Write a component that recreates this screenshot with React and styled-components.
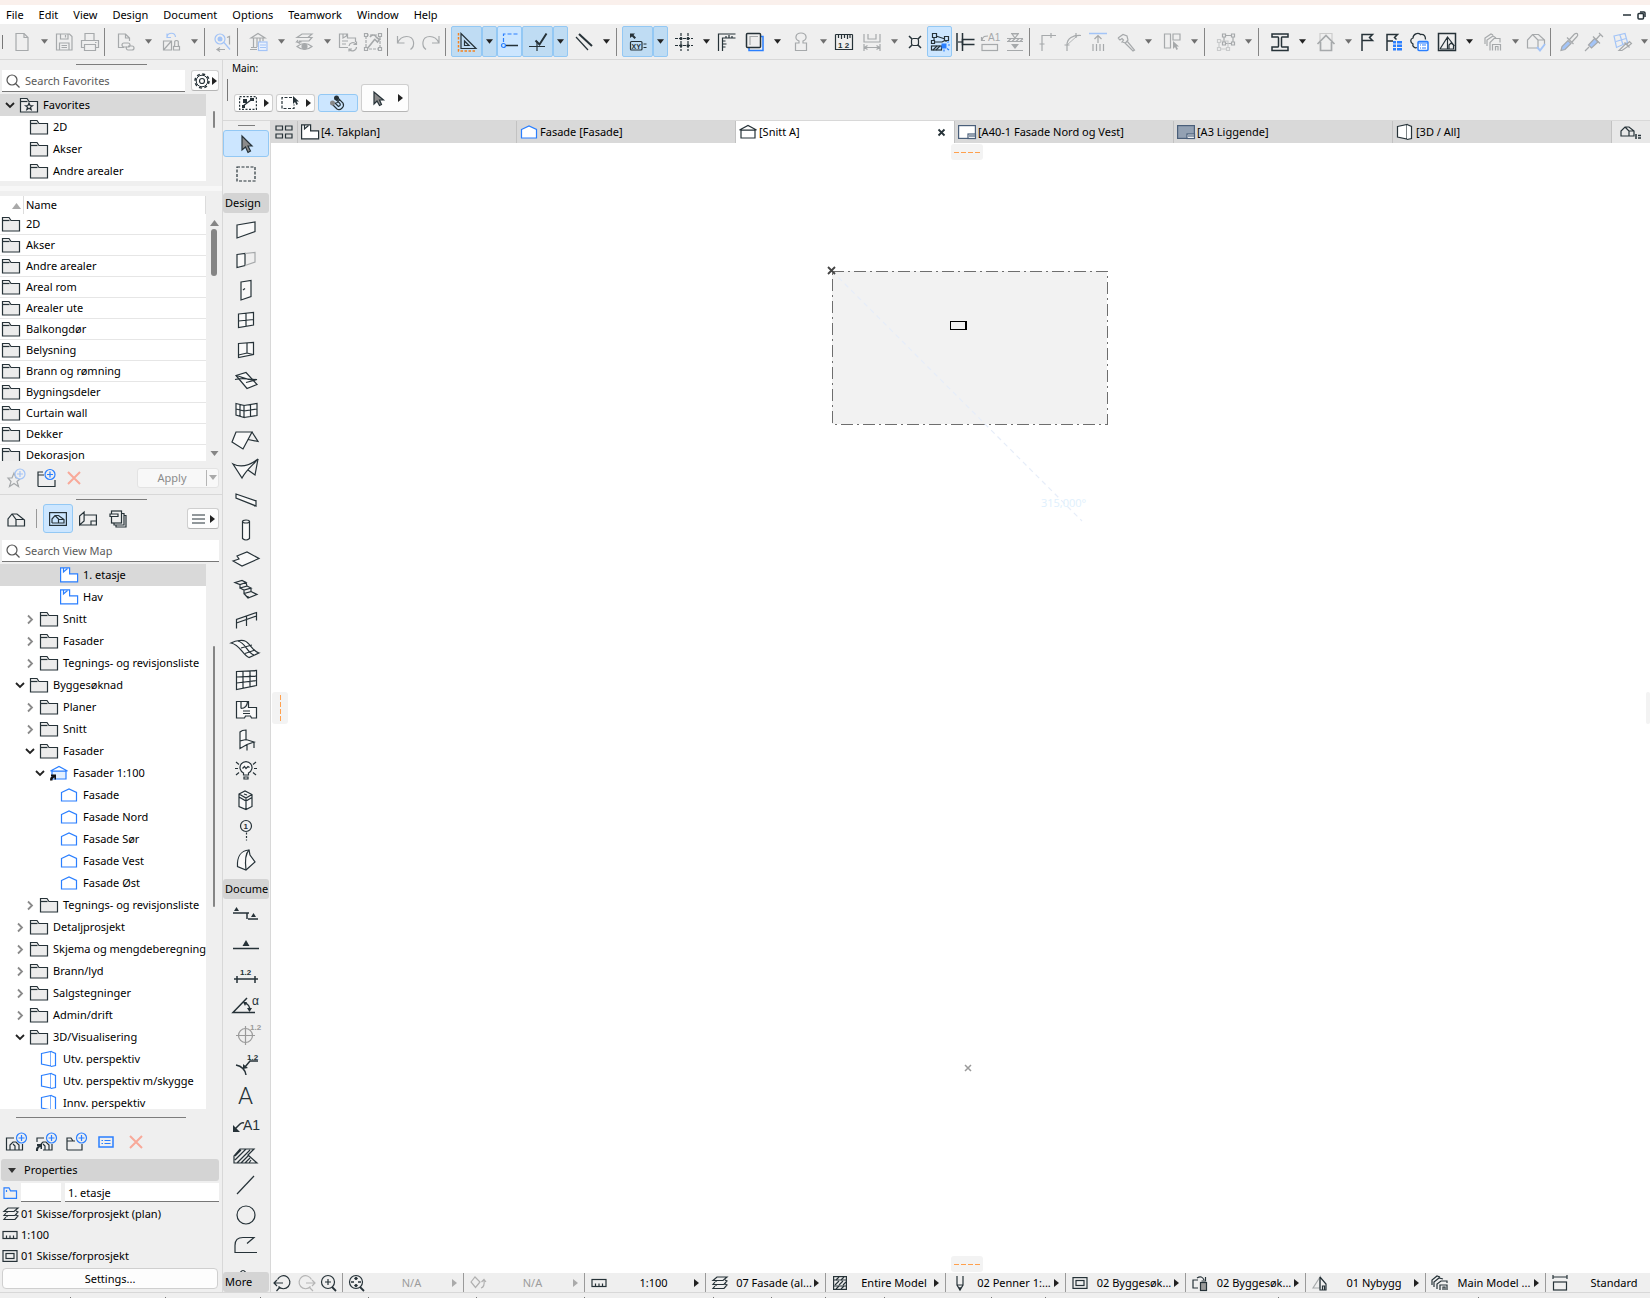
import React from "react";
import styled, { createGlobalStyle, css } from "styled-components";

const INK = "#263238";
const OFF = "#a6a9ab";
const BLUE = "#2a7fff";
const PALE = "#a3c4f7";
const GREY = "#efefef";
const LINE = "#d8d8d8";

const Global = createGlobalStyle`
  *, *::before, *::after { box-sizing: border-box; }
  body { margin: 0; background: ${GREY}; }
  body, button, input, table {
    font-family: "Noto Sans", "Open Sans", "Liberation Sans", sans-serif;
    font-size: 11px;
    line-height: 16px;
    color: #000;
  }
  button { padding: 0; border: 0; background: none; cursor: default; }
  ul { margin: 0; padding: 0; list-style: none; }
  svg { display: block; flex: none; overflow: visible; }
`;

/* ---------- drawings ---------- */

const Svg = ({ w = 20, h = 20, color = INK, children }) => (
  <svg width={w} height={h} viewBox={`0 0 ${w} ${h}`} fill="none" stroke={color} strokeWidth="1.2" aria-hidden="true">
    {children}
  </svg>
);

const Glyph = ({ x, y, size = 8, weight = 400, family = "Liberation Sans", color = INK, children }) => (
  <text x={x} y={y} fontSize={size} fontWeight={weight} fontFamily={`${family}, sans-serif`} fill={color} stroke="none">
    {children}
  </text>
);

const P = (d, extra) => <path d={d} {...extra} />;
const solid = (c = INK) => ({ fill: c, stroke: "none" });

const tool = {
  doc: <>{P("M4 1.5h8l4 4v13h-12z")}{P("M12 1.5v4h4")}</>,
  save: <>{P("M1.5 2h13l2.500 2.500v13.500h-15.500z")}{P("M5.500 2v5h7.500v-5M10.500 3v2.500M4.500 18v-7h9.500v7M6.500 13.500h5.500M6.500 15.500h5.500")}</>,
  print: <>{P("M5 8v-6.500h9v6.500M4 15.500h-2.500v-7h17v7h-2.500")}{P("M4.500 12.500h11v6h-11zM15 10.500h1.500")}</>,
  hotlink: <>{P("M8 15.500h-5.500v-13.500h7l4 4v3M9.500 2v4h4")}{P("M8 11h4a2 2 0 0 1 0 4h-4a2 2 0 0 1 0-4zM12 14h4a2 2 0 0 1 0 4h-4a2 2 0 0 1-1-3.500")}</>,
  stampSwap: <>{P("M1.500 9h8v9h-8zM1.500 18l8-9M12 14.500c2-2-1-6 2.500-6s.5 4 2.500 6M11.500 14.500h6v3.500h-6z")}{P("M5 5c1-5 8-5 8.500 0M5 1.500v4h4", { stroke: PALE })}</>,
  find: <>{P("M7 12a5 5 0 1 1 5-5 5 5 0 0 1-5 5zM11 10.500l6 7", { stroke: PALE })}<circle cx="7" cy="7" r="2.500" fill={PALE} stroke="none" />{P("M14 5.500l2.500-1v8M5 17.500h7M7 15.500l-3 2 3 2")}</>,
  bank: <>{P("M2 6l7-4.500 7 4.500zM4.500 6v9M8 6v9M11 6v4M2 15.500h6M1 17.500h7M14 6v3")}<rect x="9.500" y="10" width="8.500" height="8.500" fill="#e9f1fd" stroke={PALE} />{P("M11 13h6M11 15.500h6", { stroke: PALE })}</>,
  layersEye: <>{P("M7 2h10l-4 3.500h-11zM3 8l-1.500 2h5M13 5.500l4 0-3 3.500h-10M2 10l3 1.500")}{P("M2 14.500q7.500-6 15 0q-7.500 6-15 0z")}<circle cx="9.500" cy="14.500" r="2.500" fill={OFF} /></>,
  planSync: <>{P("M10 15.500h-8.500v-13.500h8v4h8v4M5 2v4l3.500-2v-2M4 12h4M4 9h6")}{P("M11 14a4 4 0 0 1 7-2M18.500 15a4 4 0 0 1-7 2.500M18.500 9.500v3h-3M11 19.500v-2.500h3")}</>,
  hammerBox: <>{P("M3 3h14v14h-14z", { strokeDasharray: "3 1" })}{P("M4 17l8-10M7 5c2-3 5-2.500 6.500.5l3 2-2 2.500-3-3", { strokeWidth: 1.6 })}<g fill={GREY}>{P("M1.500 15.500h3v3h-3zM15.500 15.500h3v3h-3zM15.500 1.500h3v3h-3zM1.500 1.500h3v3h-3z")}</g></>,
  undo: <>{P("M1.500 4v7h7M1.500 11c4-9 15-8 16-1 .5 3-1 6-3 7.500")}</>,
  redo: <>{P("M18 4v7h-7M18 11c-4-9-15-8-16-1-.5 3 1 6 3 7.500")}</>,
  setSquare: <>{P("M4 1.500v15h15zM7.500 9v4.500h4.500z")}{P("M1.500 1v18h17", { stroke: "#f58220", strokeWidth: 1.5, strokeDasharray: "2.500 1.500" })}</>,
  snap: <><g stroke={BLUE}>{P("M3.500 10v-8h14", { strokeDasharray: "4 2" })}<circle cx="3.500" cy="13.500" r="2" /></g>{P("M6 13.500h12", { strokeWidth: 1.5 })}</>,
  checkSnap: <>{P("M1 14.500h16M9 9v10")}{P("M7.500 8.500l4 4 7-11", { strokeWidth: 2 })}</>,
  slashes: <>{P("M5 2l13 12", { strokeWidth: 2 })}{P("M2 5l12 13")}</>,
  xy: <>{P("M2 1.500h5l-1.500 1.500 2.500 2.500-1.500 1.500-2.500-2.500-2 1.500z", solid())}<rect x="2.500" y="9.500" width="11.500" height="8.500" rx="1" /><Glyph x="3.500" y="16.500" size={7} weight={700}>XY</Glyph>{P("M15.500 12h3M15.500 15.500h3")}</>,
  grid: <>{P("M7 1v18M14 1v18M1 6.500h18M1 13.500h18", { strokeDasharray: "3 1" })}<g {...solid()}><circle cx="7" cy="6.500" r="1.500" /><circle cx="14" cy="6.500" r="1.500" /><circle cx="7" cy="13.500" r="1.500" /><circle cx="14" cy="13.500" r="1.500" /></g></>,
  rulers: <>{P("M1.500 19v-17h17M5.500 19v-13h13M5.500 9h3M5.500 12h4M5.500 15h3M9 6v-2M12 6v-3M15 6v-2")}</>,
  squares: <>{P("M4 5v13.500h14v-14h-2", { stroke: BLUE, strokeWidth: 1.5 })}<rect x="1.500" y="1.500" width="14" height="14" rx="1" fill={GREY} strokeWidth="1.500" />{P("M5 13v-8.500h8", { stroke: OFF })}</>,
  stamp: <>{P("M8 9c-5-2-3.500-8 2-8s7 6 2 8v2h3.500v7.500h-11v-7.500h3.500z")}</>,
  ruler12: <>{P("M1.500 2.500h17M1.500 2.500v15h17v-15M4.500 3v3M7.500 3v4M10.500 3v3M13.500 3v4M16 3v3")}<Glyph x="4" y="15.500" size={8} weight={700}>1 2</Glyph></>,
  dims: <>{P("M2 2v8h16v-8M6 2v5h8v-5M2 12v7M18 12v7M2.500 15.500h15M5.500 13.500l-3 2 3 2M14.500 13.500l3 2-3 2")}</>,
  explode: <>{P("M4 4l3 3M16 4l-3 3M4 16l3-3M16 16l-3-3", { strokeWidth: 1.5 })}<rect x="6.500" y="6.500" width="7" height="7" rx="2" /></>,
  editSel: <>{P("M4 5v5M6 4l9 3M3 10h9l4-2M16 8v2")}<g fill="#cce6ff">{P("M2.500 1.500h4v4h-4zM14.500 4.500h4v4h-4zM1.500 8.500h3v3h-3z")}</g><rect x="1.500" y="14" width="10" height="4" />{P("M3 18l4-4M6 18l4-4")}<rect x="11.500" y="11.500" width="5" height="5" fill={BLUE} stroke="none" />{P("M18 13h2M14 17.500v2M17.500 10.500l1-1M17 16.500l2 1.500", { stroke: BLUE })}</>,
  beamEnd: <>{P("M2 1v18M7.500 1v18", { strokeWidth: 1.5 })}{P("M19.500 7.500h-12v5h12", { strokeWidth: 1.5 })}{P("M3 10h4")}</>,
  labelBox: <><rect x="2" y="12.500" width="15.500" height="6" />{P("M2 8c1-4 3-4 6-4M1.500 5v3.500h3.500")}<Glyph x="8" y="9" size={10} color={OFF}>A1</Glyph></>,
  level: <>{P("M2 6.500h16M2 9.500h16M7 2l3 4 3-4zM6 1.500h8M2 18.500h16M3 9.500l3-3M7 9.500l3-3M11 9.500l3-3M15 9.500l3-3")}{P("M6 12h8l-4 5z", solid(OFF))}</>,
  corner: <>{P("M4 19v-15.500h14M1.500 12h5M13 1v5")}</>,
  arcs: <>{P("M4 19v-6c0-7 6-10 14-9.500M1.500 13h5M13 1v5")}{P("M4 13l10-9", { strokeWidth: 0.8 })}</>,
  adjust: <>{P("M1 1.500h18", { stroke: PALE, strokeWidth: 1.500 })}{P("M10 4v7M6.500 7l3.500-3.500 3.500 3.500M5 12v7M8.500 12v7M12 12v7M15.500 12v7")}</>,
  hammer: <>{P("M2 6l5-3.500 4 1.500 1 4-2.500 3-3-1M2 6l2 2 2-1.500 1.500 1.500-2 2.500M11 9l7.500 9-1.500 1-8-8")}</>,
  align: <>{P("M2.500 2h6v14h-6zM11 2h7v6h-7z")}{P("M11 9v8l2-2 1.500 3 1.500-1-1.500-2.500h2.500z", solid(OFF))}</>,
  group: <>{P("M8 3.500h9v8h-9z")}{P("M3 9h9v8h-9z", { stroke: "#c9cbcc" })}<g fill={GREY}>{P("M6.500 2h3v3h-3zM15.500 2h3v3h-3zM6.500 10h3v3h-3zM15.500 10h3v3h-3z")}</g><g fill={GREY} stroke="#c9cbcc">{P("M1.500 7.500h3v3h-3zM1.500 15.500h3v3h-3zM10.500 15.500h3v3h-3z")}</g></>,
  beam: <>{P("M2 2h16v3h-6q-.5 0-.5 1v8q0 1 .5 1h6v3.500h-16v-3.500h6q.5 0 .5-1v-8q0-1-.5-1h-6z", { strokeWidth: 1.500 })}</>,
  home: <>{P("M4 9v-7.500h12v7.500", { stroke: "#cccccc" })}{P("M1.500 12l8.500-8.500 8.500 8.500M4.500 10v8.500h11v-8.500", { strokeWidth: 1.7 })}</>,
  flag: <>{P("M3 19v-16.500h10.500l-3 3 3 3h-10.500", { strokeWidth: 1.500 })}</>,
  flagList: <>{P("M3 19v-16.500h10.500l-3 3 2 2M3 9h6", { strokeWidth: 1.500 })}{P("M9 9h3v2.500h-3zM13 9h5v2.500h-5zM9 12.500h3v2.500h-3zM13 12.500h5v2.500h-5zM9 16h3v2.500h-3zM13 16h5v2.500h-5z", solid(BLUE))}</>,
  cloud: <>{P("M8 15.500c-2 1-5-1-4-3.500-3-1.500-3-5 0-6 0-4 5-6 7.500-3.500 4-.5 5 2 5 5", { strokeWidth: 1.300 })}<rect x="9" y="9.500" width="10" height="9" rx="1" fill="#fff" stroke={BLUE} strokeWidth="1.500" />{P("M11 13h1M13 13h4M11 16h1M13 16h4M9 11h10", { stroke: BLUE })}</>,
  frameHouse: <><rect x="1.500" y="1.500" width="17" height="17" strokeWidth="1.500" />{P("M3 17l7.500-12 7 9M10.500 5v12M3 17h14M12 17v-4l2-2 2.500 2v4")}</>,
  houses: <>{P("M2 12v-6l6-4 2 1M4 14v-6l6-4 3 2M7 18.500v-8l4-4h6v4M9.500 18.500v-6h8v6M12.500 18.500v-4h2.500v4")}</>,
  houseCheck: <>{P("M12 16h-10.500v-8l5-5.500h6l6 5.500v4M6.500 2.500l5.500 5.500v8M12 8h6.500")}{P("M11 15l3 3.500 5-6.500", { stroke: PALE, strokeWidth: 2 })}</>,
  dropper: <>{P("M2 18.500l1-4 6-6 3 3-6 6z", { fill: PALE })}{P("M8 5.500l6.500 6.500M10.500 7.500l5-5.500c3-2 4 1 2.500 2.500l-5 5.500")}</>,
  syringe: <>{P("M1 19l4-4M4.500 13l6-6.500 3.500 3.500-6.500 6z", { fill: PALE })}{P("M9 4.500l7 7M12 7.500l4.500-5M15 1l4 4")}</>,
  pickGrid: <>{P("M2 4l11-2.500 2.500 9-11 5zM4 9.500l10-3M8 3l3 10", { stroke: PALE })}{P("M7 18.500l7-7 2.500 2.500-6.500 4.500zM12.500 10.500l5 5M15 12l2.500-2.500 2 2-3 2.500")}</>,
};

const Folder = ({ fill = "#ececec", star }) => (
  <Svg w={18} h={16}>
    {P("M.5 15v-13.500h6.500l2 3h8.500v10.500z", { fill })}
    {P("M.5 4.500h7")}
    {star && P("M9 6l1 2.500 2.500.2-2 1.600.7 2.400-2.200-1.400-2.200 1.400.7-2.400-2-1.600 2.500-.2z")}
  </Svg>
);
const Plan = ({ color = BLUE }) => (
  <Svg w={18} h={16} color={color}>
    {P("M.6.8h9v6h8v8h-17z", { fill: "#fff" })}
    {P("M3.500 1v4l4-3.500")}
  </Svg>
);
const Facade = ({ color = BLUE, linked, roof }) => (
  <Svg w={18} h={16} color={color}>
    {P(linked || roof ? "M2 6h14v8h-14z" : "M1.500 5.500l7.500-3.500 7.500 3.500v8.500h-15z", { fill: linked ? "#e3f0ff" : "#fff" })}
    {(linked || roof) && P("M.5 6l8.500-4.500 8.500 4.500z", { fill: "#fff" })}
    {linked && P("M0 15.500c0-3 1-4.500 3-4.500h-2v-1.500h5v5h-1.500v-2c-2 .5-2 1.500-2 3z", solid("#111"))}
  </Svg>
);
const Persp = ({ color = BLUE }) => (
  <Svg w={18} h={18} color={color}>
    {P("M1.500 3.500l9.500-2v14.500l-9.500-2z", { fill: "#fff" })}
    {P("M11 1.500l4.500 2v12l-4.500 1", { fill: "#fff" })}
  </Svg>
);
const Layout = ({ fill = "#fff" }) => (
  <Svg w={18} h={14} color="#4a5f7a">
    <rect x="0.600" y="0.600" width="16.800" height="12.800" fill={fill} />
    <rect x="10" y="9" width="7.500" height="4.500" fill="#fff" />
    {P("M11 11h6")}
  </Svg>
);
const Chevron = ({ open }) => (
  <svg width="12" height="12" viewBox="0 0 12 12" fill="none" stroke={open ? "#222" : "#8a8a8a"} strokeWidth="1.8">
    <path d={open ? "M2 4l4 4 4-4" : "M4 2.500l4 4-4 4"} />
  </svg>
);
const Lens = () => (
  <Svg w={14} h={14} color="#555"><circle cx="6" cy="6" r="5" />{P("M9.500 9.500l4 4")}</Svg>
);
const Right = ({ color = "#222" }) => (
  <svg width="5" height="8" viewBox="0 0 5 8" fill={color}><path d="M0 0l5 4-5 4z" /></svg>
);
const Down = ({ color = "#222", w = 8 }) => (
  <svg width={w} height="5" viewBox="0 0 8 5" fill={color}><path d="M0 0h8l-4 5z" /></svg>
);
const Up = () => (
  <svg width="9" height="6" viewBox="0 0 9 6" fill="#858585"><path d="M0 6h9l-4.500-6z" /></svg>
);
const Pointer = () => (
  <Svg>{P("M6 2v14l3.500-3 2.500 5.500 2.500-1.500-2.500-5h4z", { fill: "#8b8b8b" })}</Svg>
);
const Plus = ({ x, y, color = BLUE }) => (
  <g stroke={color}><circle cx={x} cy={y} r="5" fill={GREY} /><path d={`M${x - 3} ${y}h6M${x} ${y - 3}v6`} /></g>
);
const Cross = ({ color = "#f8a999" }) => (
  <svg width="14" height="14" viewBox="0 0 14 14" stroke={color} strokeWidth="2"><path d="M1 1l12 12M13 1l-12 12" /></svg>
);
const houseShape = "M9 15h-8v-7l4-5h5l7.500 6v6h-8.500v-6.500l-4-5.500M9 8.500h8";

/* ---------- menu and toolbar ---------- */

const Page = styled.div`
  display: flex;
  flex-direction: column;
  height: 100vh;
  min-width: 900px;
  overflow: hidden;
  background: ${GREY};
`;
const TitleStrip = styled.div`
  flex: none;
  height: 5px;
  background: #faf0ec;
`;
const MenuBar = styled.nav`
  flex: none;
  display: flex;
  align-items: center;
  gap: 15px;
  height: 19px;
  padding: 1px 4px 0 6px;
  background: #fff;
`;
const WindowButtons = styled.div`
  display: flex;
  gap: 6px;
  margin-left: auto;
`;
const ToolBar = styled.div`
  flex: none;
  display: flex;
  align-items: center;
  height: 36px;
  padding-left: 2px;
  border-bottom: 1px solid ${LINE};
  overflow: hidden;
`;
const Grip = styled.span`
  flex: none;
  width: 1px;
  height: 14px;
  margin-right: 3px;
  background: #777;
`;
const Separator = styled.span`
  flex: none;
  width: 1px;
  height: 28px;
  margin: 0 5px 0 2px;
  background: #858585;
`;
const ToolButton = styled.button`
  flex: none;
  display: flex;
  align-items: center;
  justify-content: center;
  width: ${(p) => (p.$size === "arrow" ? 15 : p.$size === "wide" ? 31 : 25)}px;
  height: 31px;
  border: 1px solid transparent;
  ${(p) => p.$on && css`
    background: ${p.$on === "light" ? "#cce6ff" : "#bfdcf3"};
    border-color: #93c8f4;
    border-radius: 2px;
  `}
`;

const toolbar = [
  ["doc", "New", 1, 0], ["save", "Save", 0, 0], ["print", "Print", 0, 0], null,
  ["hotlink", "Hotlink", 1, 0], ["stampSwap", "Swap", 1, 0], null,
  ["find", "Find and Select", 0, 0], null,
  ["bank", "Attributes", 1, 0], ["layersEye", "Layer visibility", 1, 0], ["planSync", "Update view", 0, 0], ["hammerBox", "Rebuild", 0, 0], null,
  ["undo", "Undo", 0, 0], ["redo", "Redo", 0, 0], null,
  ["setSquare", "Guide Lines", 1, 1, "dark"], ["snap", "Snap Guides", 0, 1, "light"], ["checkSnap", "Snap Points", 1, 1, "dark"], ["slashes", "Parallel", 1, 1], null,
  ["xy", "Tracker", 1, 1, "dark"], ["grid", "Grid Snap", 1, 1], ["rulers", "Rulers", 0, 1], ["squares", "Trace", 1, 1],
  ["stamp", "Reference", 1, 0], ["ruler12", "Measure", 0, 1], ["dims", "Dimensions", 1, 0], ["explode", "Intersection", 0, 1],
  ["editSel", "Quick Selection", 0, 1, "light"], ["beamEnd", "Trim", 0, 1], ["labelBox", "Label", 0, 0], ["level", "Level", 0, 0], null,
  ["corner", "Corner", 0, 0], ["arcs", "Arc", 0, 0], ["adjust", "Adjust", 0, 0], ["hammer", "Modify", 1, 0], ["align", "Align", 1, 0], null,
  ["group", "Group", 1, 0], null,
  ["beam", "Profile", 1, 1], ["home", "Home Story", 1, 0], ["flag", "Flag", 0, 1], ["flagList", "Flag List", 0, 1], ["cloud", "Issues", 0, 1],
  ["frameHouse", "Perspective", 1, 1], ["houses", "Options", 1, 0], ["houseCheck", "Check model", 0, 0], null,
  ["dropper", "Pick up", 0, 0], ["syringe", "Inject", 0, 0], ["pickGrid", "Surface", 1, 0],
];

/* ---------- left palettes ---------- */

const Body = styled.div`
  flex: 1;
  display: flex;
  min-height: 0;
`;
const Side = styled.aside`
  flex: none;
  display: flex;
  flex-direction: column;
  width: 223px;
  border-right: 1px solid ${LINE};
`;
const PaletteGrip = styled.div`
  flex: none;
  width: ${(p) => p.$w || 71}px;
  height: 1px;
  margin: ${(p) => p.$m || "4px auto 5px"};
  background: #7d7d7d;
`;
const SearchRow = styled.div`
  flex: none;
  display: flex;
  gap: 6px;
  margin-top: ${(p) => p.$mt || 0}px;
  padding: 0 3px 0 2px;
`;
const SearchBox = styled.label`
  flex: 1;
  display: flex;
  align-items: center;
  gap: 5px;
  min-width: 0;
  height: 22px;
  padding-left: 4px;
  background: #fff;
  border-bottom: 1px solid #777;
`;
const SearchInput = styled.input`
  flex: 1;
  min-width: 0;
  padding: 0;
  border: 0;
  outline: 0;
  background: none;
  &::placeholder { color: #5a5a5a; opacity: 1; }
`;
const SmallButton = styled.button`
  flex: none;
  display: flex;
  align-items: center;
  justify-content: center;
  gap: ${(p) => p.$gap || 2}px;
  width: ${(p) => p.$w}px;
  height: ${(p) => p.$h || 21}px;
  border: 1px solid ${(p) => (p.$on ? "#93c8f4" : "#cfcfcf")};
  border-bottom-color: ${(p) => (p.$on ? "#93c8f4" : "#b5b5b5")};
  border-radius: 3px;
  background: ${(p) => (p.$on ? "#cce6ff" : "#fdfdfd")};
`;
const Scroller = styled.div`
  flex: ${(p) => (p.$grow ? "1" : "none")};
  display: flex;
  min-height: 0;
  height: ${(p) => (p.$h ? p.$h + "px" : "auto")};
  margin-top: ${(p) => p.$mt || 0}px;
`;
const Sheet = styled.div`
  flex: 1;
  min-width: 0;
  overflow: hidden;
  background: #fff;
`;
const Track = styled.div`
  flex: none;
  display: flex;
  flex-direction: column;
  align-items: center;
  width: 16px;
  padding: ${(p) => p.$pad || "0"};
`;
const Thumb = styled.span`
  width: ${(p) => p.$w || 2}px;
  height: ${(p) => p.$h}px;
  margin: 3px 0 auto;
  border-radius: 3px;
  background: #858585;
`;
const TreeRow = styled.button`
  display: flex;
  align-items: center;
  gap: 5px;
  width: 100%;
  height: 22px;
  padding-left: ${(p) => 4 + 10 * p.$level}px;
  background: ${(p) => (p.$on ? "#d9d9d9" : "transparent")};
  white-space: nowrap;
  text-align: left;
`;
const Twist = styled.span`
  flex: none;
  width: 12px;
  height: 12px;
  margin-right: -1px;
`;
const Splitter = styled.div`
  flex: none;
  height: 5px;
  margin: 5px 0;
  background: #f7f7f7;
`;
const NameTable = styled.table`
  width: 100%;
  border-spacing: 0;
  table-layout: fixed;
  th, td { padding: 0; text-align: left; font-weight: 400; white-space: nowrap; }
  th { height: 18px; line-height: 16px; border-right: 1px solid #dcdcdc; }
  td { height: 21px; border-bottom: 1px solid #e6e6e6; }
  th:first-child, td:first-child { width: 24px; padding-left: 2px; }
  th:last-child, td:last-child { padding-left: 2px; }
`;
const SortMark = styled.span`
  display: flex;
  justify-content: flex-end;
  padding: 2px 2px 0 0;
  opacity: 0.7;
`;
const Actions = styled.div`
  flex: none;
  display: flex;
  align-items: center;
  gap: ${(p) => p.$gap}px;
  height: ${(p) => p.$h}px;
  padding: 0 3px 0 ${(p) => p.$left}px;
  border-bottom: ${(p) => (p.$line ? `1px solid ${LINE}` : "0")};
`;
const ApplyGroup = styled.div`
  display: flex;
  align-items: center;
  width: 82px;
  height: 20px;
  margin-left: auto;
  border: 1px solid #e3e3e3;
  border-radius: 3px;
  background: #f8f8f8;
`;
const ApplyButton = styled.button`
  flex: 1;
  height: 16px;
  border-right: 1px solid #b5b5b5;
  color: #8a8a8a;
`;
const ApplyMore = styled.button`
  display: flex;
  justify-content: center;
  width: 11px;
`;
const Divider = styled.span`
  flex: none;
  width: 1px;
  height: 19px;
  margin: 0 6px 0 5px;
  background: #999;
`;
const MapTab = styled.button`
  display: flex;
  align-items: center;
  justify-content: center;
  width: 30px;
  height: 29px;
  border: 1px solid ${(p) => (p.$on ? "#93c8f4" : "transparent")};
  border-radius: 3px;
  background: ${(p) => (p.$on ? "#cce6ff" : "transparent")};
`;
const PushRight = styled.div`
  margin-left: auto;
`;
const PushCross = styled.button`
  margin-left: 4px;
`;
const PropsHead = styled.button`
  flex: none;
  display: flex;
  align-items: center;
  gap: 8px;
  height: 22px;
  margin: 0 3px 1px 1px;
  padding-left: 7px;
  border-radius: 3px;
  background: #d4d4d4;
`;
const PropLine = styled.div`
  flex: none;
  display: flex;
  align-items: center;
  gap: 4px;
  height: 21px;
  padding: 0 3px 0 3px;
  white-space: nowrap;
`;
const Field = styled.input`
  flex: ${(p) => (p.$w ? "none" : "1")};
  width: ${(p) => (p.$w ? p.$w + "px" : "auto")};
  min-width: 0;
  height: 19px;
  padding: 0 3px;
  border: 0;
  border-bottom: 1px solid #777;
  background: #fff;
`;
const SettingsButton = styled.button`
  flex: none;
  height: 21px;
  margin: 2px 4px 3px 2px;
  border: 1px solid #cfcfcf;
  border-radius: 4px;
  background: #fdfdfd;
`;

const favourites = ["2D", "Akser", "Andre arealer", "Areal rom", "Arealer ute", "Balkongdør", "Belysning", "Brann og rømning", "Bygningsdeler", "Curtain wall", "Dekker", "Dekorasjon"];
const viewMap = [
  [4, "plan", "1. etasje"], [4, "plan", "Hav"],
  [2, "folder", "Snitt", false], [2, "folder", "Fasader", false], [2, "folder", "Tegnings- og revisjonsliste", false],
  [1, "folder", "Byggesøknad", true], [2, "folder", "Planer", false], [2, "folder", "Snitt", false], [2, "folder", "Fasader", true],
  [3, "linked", "Fasader 1:100", true],
  [4, "facade", "Fasade"], [4, "facade", "Fasade Nord"], [4, "facade", "Fasade Sør"], [4, "facade", "Fasade Vest"], [4, "facade", "Fasade Øst"],
  [2, "folder", "Tegnings- og revisjonsliste", false],
  [1, "folder", "Detaljprosjekt", false], [1, "folder", "Skjema og mengdeberegning", false], [1, "folder", "Brann/lyd", false],
  [1, "folder", "Salgstegninger", false], [1, "folder", "Admin/drift", false], [1, "folder", "3D/Visualisering", true],
  [2, "persp", "Utv. perspektiv"], [2, "persp", "Utv. perspektiv m/skygge"], [2, "persp", "Innv. perspektiv"],
];
const treeIcon = {
  plan: <Plan />, folder: <Folder />, linked: <Facade linked />, facade: <Facade />, persp: <Persp />,
};

const StackIcon = ({ w = 16 }) => (
  <Svg w={w} h={14}>{P("M5 1h10l-4 3.500h-10zM13 4l2 1-3 3.500h-11l2-2.500M13 8l2 1-3 3.500h-11l2-2.500M4 4.500v1.500M4 8.500v1.500")}</Svg>
);
const RulerIcon = () => (
  <Svg w={14} h={10}><rect x="0" y="1.500" width="14" height="7" />{P("M3.500 8v-2.500M7 8v-2.500M10.500 8v-2.500")}</Svg>
);
const FrameIcon = () => (
  <Svg w={14} h={12}><rect x="0" y="0.600" width="14" height="10.800" /><rect x="3" y="3.500" width="8" height="5" /></Svg>
);

function SidePanel() {
  return (
    <Side>
      <PaletteGrip />
      <SearchRow>
        <SearchBox><Lens /><SearchInput type="text" aria-label="Search Favorites" placeholder="Search Favorites" /></SearchBox>
        <SmallButton $w={28} aria-label="Favorites settings">
          <Svg w={16} h={16}><circle cx="8" cy="8" r="7" strokeWidth="1.500" strokeDasharray="3 2.500" /><circle cx="8" cy="8" r="5.800" strokeWidth="1" /><circle cx="8" cy="8" r="2.500" /></Svg>
          <Right />
        </SmallButton>
      </SearchRow>
      <Scroller $h={87} $mt={2}>
        <Sheet>
          <TreeRow $level={0} $on><Twist><Chevron open /></Twist><Folder star />Favorites</TreeRow>
          {favourites.slice(0, 3).map((n) => (
            <TreeRow key={n} $level={1}><Twist /><Folder />{n}</TreeRow>
          ))}
        </Sheet>
        <Track $pad="14px 0 0"><Thumb $h={17} /></Track>
      </Scroller>
      <Splitter />
      <Scroller $h={265}>
        <Sheet>
          <NameTable>
            <thead><tr><th aria-label="Sort"><SortMark><Up /></SortMark></th><th>Name</th></tr></thead>
            <tbody>
              {favourites.map((n) => <tr key={n}><td><Folder /></td><td>{n}</td></tr>)}
            </tbody>
          </NameTable>
        </Sheet>
        <Track $pad="24px 0 5px"><Up /><Thumb $w={6} $h={47} /><Down color="#858585" w={9} /></Track>
      </Scroller>
      <Actions $h={34} $gap={11} $left={8} $line>
        <button aria-label="Add favorite"><Svg w={18} h={18} color={OFF}>{P("M6 4l2 5h5l-4 3.500 1.500 5-4.500-3-4.500 3 1.500-5-3-3.500h4z")}<Plus x={12} y={5} color={PALE} /></Svg></button>
        <button aria-label="New folder"><Svg w={19} h={18}>{P("M1 17.500v-14.500h5M1 6h6M18 11v6.500h-17")}<Plus x={13} y={5.500} /></Svg></button>
        <button aria-label="Delete favorite"><Cross /></button>
        <ApplyGroup><ApplyButton>Apply</ApplyButton><ApplyMore aria-label="Apply options"><Down color="#aaa" /></ApplyMore></ApplyGroup>
      </Actions>
      <PaletteGrip $m="4px auto 4px" />
      <Actions $h={29} $gap={0} $left={1}>
        <MapTab aria-label="Project Map"><Svg w={18} h={16}>{P(houseShape)}</Svg></MapTab>
        <Divider />
        <MapTab $on aria-label="View Map"><Svg w={18} h={14}><rect x="0.600" y="0.600" width="16.800" height="12.800" />{P("M3 11v-4l3-3.500h3.500l5.500 4v3.500h-5.500M6 3.500l3.500 3.500v4h-6.500M9.500 7.500h5")}</Svg></MapTab>
        <MapTab aria-label="Layout Book"><Svg w={18} h={16}>{P("M.6 14v-9l4.500-4v9zM5 4h12.400v10h-16.800M12 14v-4h5")}</Svg></MapTab>
        <MapTab aria-label="Publisher Sets"><Svg w={18} h={18}><rect x="2.500" y="1" width="10" height="12" />{P("M13 3.500h2v11.500h-10v-2M15 5.500h2v11.500h-10v-2")}{P("M1 4h8v2.500h-8z", { fill: GREY })}</Svg></MapTab>
        <PushRight>
          <SmallButton $w={32} $gap={5} aria-label="Navigator options"><Svg w={13} h={10}>{P("M0 1h13M0 5h13M0 9h13")}</Svg><Right /></SmallButton>
        </PushRight>
      </Actions>
      <SearchRow $mt={7}>
        <SearchBox><Lens /><SearchInput type="text" aria-label="Search View Map" placeholder="Search View Map" /></SearchBox>
      </SearchRow>
      <Scroller $grow $mt={2}>
        <Sheet as="ul">
          {viewMap.map(([level, kind, text, open], i) => (
            <li key={i}>
              <TreeRow $level={level} $on={i === 0}>
                <Twist>{open !== undefined && <Chevron open={open} />}</Twist>
                {treeIcon[kind]}
                {text}
              </TreeRow>
            </li>
          ))}
        </Sheet>
        <Track $pad="79px 0 0"><Thumb $h={261} /></Track>
      </Scroller>
      <PaletteGrip $w={170} $m="8px 0 7px 16px" />
      <Actions $h={34} $gap={8} $left={5}>
        <button aria-label="Save view"><Svg w={22} h={18}>{P("M9 5h-7.500v12h16v-6M5 17v-5l3-3h3l3 3v5h-4v-4l-2-2")}<Plus x={16.5} y={5} /></Svg></button>
        <button aria-label="Clone folder"><Svg w={22} h={18}>{P("M9 5h-7v4M8 17h9v-6M6 11l2-2h3l3 3v5M10 17v-4l-2-2")}{P("M1 18c-.5-3 1-5 3-5h-2v-2h5v5h-1.500v-2c-2 .5-2.500 2-2.500 4z", solid())}<Plus x={16.5} y={5} /></Svg></button>
        <button aria-label="New view folder"><Svg w={22} h={18}>{P("M2 17v-12h4l2 3M2 8h8M17 11v6h-15")}<Plus x={16.5} y={5} /></Svg></button>
        <button aria-label="View settings"><Svg w={22} h={12} color={BLUE}><rect x="4" y="1" width="14" height="10" strokeWidth="1.500" />{P("M6.500 4.500h1.500M9.500 4.500h6M6.500 7.500h1.500M9.500 7.500h6")}</Svg></button>
        <PushCross aria-label="Delete view"><Cross /></PushCross>
      </Actions>
      <PropsHead><Down w={8} color="#333" />Properties</PropsHead>
      <PropLine>
        <Svg w={14} h={12} color={BLUE}>{P("M1 .8h5l1.500 3h6v7.500h-12.500zM3.500 3v2")}</Svg>
        <Field $w={40} aria-label="View ID" defaultValue="" />
        <Field aria-label="View name" defaultValue="1. etasje" />
      </PropLine>
      <PropLine><StackIcon w={14} />01 Skisse/forprosjekt (plan)</PropLine>
      <PropLine><RulerIcon />1:100</PropLine>
      <PropLine><FrameIcon />01 Skisse/forprosjekt</PropLine>
      <SettingsButton>Settings...</SettingsButton>
    </Side>
  );
}

/* ---------- info box ---------- */

const Main = styled.div`
  flex: 1;
  display: flex;
  flex-direction: column;
  min-width: 0;
`;
const InfoBox = styled.div`
  flex: none;
  height: 61px;
  padding-left: 9px;
  border-bottom: 1px solid ${LINE};
  font-size: 10px;
`;
const InfoTools = styled.div`
  display: flex;
  align-items: flex-end;
  gap: 3px;
  height: 36px;
`;
const InfoGrip = styled.span`
  width: 1px;
  height: 22px;
  margin: 0 3px 11px -5px;
  background: #777;
`;

/* ---------- toolbox ---------- */

const Work = styled.div`
  flex: 1;
  display: flex;
  min-height: 0;
`;
const ToolBox = styled.div`
  flex: none;
  display: flex;
  flex-direction: column;
  width: 48px;
  padding-right: 1px;
  border-right: 1px solid ${LINE};
`;
const ToolList = styled.div`
  flex: 1;
  min-height: 0;
  overflow: hidden;
`;
const BoxButton = styled.button`
  display: flex;
  align-items: center;
  justify-content: center;
  width: 100%;
  height: 30px;
`;
const ArrowButton = styled(BoxButton)`
  height: 27px;
  border: 1px solid #93c8f4;
  border-radius: 3px;
  background: #cce6ff;
`;
const MarqueeButton = styled(BoxButton)`
  height: 34px;
`;
const BoxHead = styled.div`
  flex: none;
  height: 20px;
  margin: ${(p) => p.$m || "0"};
  padding: 2px;
  border-radius: 3px;
  background: #d4d4d4;
  overflow: hidden;
`;

const W = { fill: "#fff", fillOpacity: 0.6 };
const design = [
  ["Wall", <>{P("M1 5l18-3v9.500l-18 6.500z", W)}</>],
  ["Curtain window", <>{P("M1 4.500l8-1v12l-8 2z", W)}{P("M9 3.500l10-1v9.500l-10 3.500", { stroke: OFF })}</>],
  ["Door", <>{P("M5 2l10-1.500v16l-10 3.500z", W)}{P("M7 10l2-1.500")}</>],
  ["Window", <>{P("M2.500 4l15-1.500v12.500l-15 2.500zM2.500 11l15-1.500M10 3v13.500", W)}</>],
  ["Corner Window", <>{P("M2.500 3.500l15-1v12l-15 3z", W)}{P("M11 3v10M2.500 15l8.500-2 6 1.500")}</>],
  ["Skylight", <>{P("M0 5.500l10-3 11 12-10 4z", W)}{P("M-1 9.500c8-2 12 0 22 0-8 2-13-2-21-4M21 9.500l-11 3")}</>],
  ["Curtain Wall", <>{P("M0 3.500l8 2v12l-8-2.500zM8 5.500l13-2v12l-13 2M0 9l8 2 13-2M4 4.500v12M14.500 4.500v12", W)}</>],
  ["Roof", <>{P("M0 2h16l-9 17-11-7z", W)}{P("M16 2l6 9.500-10-2")}</>],
  ["Shell", <>{P("M-3 4c8 4 16 2 25-5-4 5-12 11-16 19z", W)}{P("M22-1l-3 16-7-5")}</>],
  ["Beam", <>{P("M0 4l20 7v5l-20-8zM18 10.500h2.500M18 16h2.500", W)}</>],
  ["Column", <>{P("M6.500 1.500v17q3.500 3 7 0v-17", W)}<ellipse cx="10" cy="1.500" rx="3.500" ry="1.500" /></>],
  ["Slab", <>{P("M-3 11l6-2-2-3 10-4 12 6.500-17 7.500z", W)}</>],
  ["Stair", <>{P("M-1 2.500l7-2 4 2-6 2zM4 4.500v3.500l7-2-1-3.500M4 8l4 2 7-2-4-2M8 10v3.500l7-2v-3.500M8 13.500l4 4.500 9-3.500-6-3M12 18v-2")}</>],
  ["Railing", <>{P("M.5 18.500v-9l20-7v8M.5 13l20-7M10.500 6v10")}</>],
  ["Mesh roof", <>{P("M-5 3c6-3 12-3 14-2 5 2 7 10 14 12l-10 4.500c-6-2-9-13-18-14.500z", W)}{P("M2 1c8 2 9 12 16 14M5 8l11-3M9 13.500l10-3.500")}</>],
  ["Grid wall", <>{P("M.5 1.500l20-1v15l-20 4zM.5 7l20-1M.5 13l20-2.500M7 1v17M14 1v15.500", W)}</>],
  ["Zone", <>{P("M.5 1.500h12v6h8v10.500h-5l-1-2h-5l-1 2h-8zM5 1.500v7M5 8.500q6 0 6.500-7M7 11h7M7 13.500h7", W)}</>],
  ["Object", <>{P("M4 11v-9q2-2 6-2v10.500M4 18.500v-7.500l6-1.500 8 2.500-7 2.500zM11 14.500v6M18 12v6", W)}</>],
  ["Lamp", <>{P("M7.500 13a6 6 0 1 1 5 0v2h-5zM8 17h4v2h-4zM6.500 8.500l2-2 1.500 2 2-2 1.500 1M0 2l3 2.500M20 2l-3 2.500M-1 8.500h3M18 8.500h3M0 15l3-2.500M20 15l-3-2.500", W)}</>],
  ["Equipment", <>{P("M3 4l6-3 7 3.500v12l-6 3-7-3zM3 4l7 4 6-3.500M10 8v11.500M3 7l7 4 6-3.500M8 4l3 1", W)}</>],
  ["Opening", <><circle cx="10" cy="6" r="5.500" />{P("M10.500 12.500v8", { strokeDasharray: "2 1.500" })}<Glyph x="7.500" y="9" size={8} weight={700}>1</Glyph></>],
  ["Morph", <>{P("M1.500 16.500c-.5-9 3-16 11.500-16.500l1 5 5 7-9 8z", W)}{P("M13 0c-4 4-4 12-3 20")}</>],
];
const documenting = [
  ["Section", <>{P("M-3 8h16M11 8v6M12 14h10", { strokeWidth: 1.500 })}{P("M-2 6l2.500-4 2.500 4zM15 12l2.500-4 2.500 4z", solid())}</>],
  ["Elevation", <>{P("M-3 13.500h26", { strokeWidth: 1.500 })}{P("M6.500 11l3.500-6 3.500 6z", solid())}</>],
  ["Dimension", <>{P("M-2 14h24M1 11v7M19 11v7", { strokeWidth: 1.500 })}<Glyph x="4" y="10" size={8} weight={700}>1.2</Glyph></>],
  ["Angle Dimension", <>{P("M11 3l-14 14.500h22M9 8c3 1 5 4 4.500 7", { strokeWidth: 1.500 })}{P("M7 7h4l-2 4zM11 13h5l-2.500 4z", solid())}<Glyph x="16" y="10" size={12}>α</Glyph></>],
  ["Level Dimension", <><g stroke="#9a9a9a"><circle cx="9.500" cy="10.500" r="7" />{P("M0 10.500h19M9.500 1v19")}</g><Glyph x="14" y="5" size={8} weight={700} color="#9a9a9a">1.2</Glyph></>],
  ["Radial Dimension", <>{P("M0 10c5 1 9 4 10 10M9 12l5-6h8", { strokeWidth: 1.500 })}{P("M7 9l0 5 5-1z", solid())}<Glyph x="11" y="5" size={8} weight={700}>1.2</Glyph></>],
  ["Text", <Glyph x="2" y="19" size={24} weight={300} family="Roboto">A</Glyph>],
  ["Label", <>{P("M-1 14l5-5q2-2 4-1", { strokeWidth: 1.500 })}{P("M-3 10v7h7z", solid())}<Glyph x="7" y="15" size={14} family="Liberation Sans">A1</Glyph></>],
  ["Fill", <>{P("M-2 18v-7l6-7h14l-6 6 9 8zM-1 15l11-11M1 18l13-13M5 18l8-8M9 18l5-5M13 18l2-3M-1 11l6-6")}</>],
  ["Line", <>{P("M1 19l17-18")}</>],
  ["Circle", <circle cx="10" cy="10" r="9" />],
  ["Polyline", <>{P("M21 17.500h-22v-7q0-8 8-8h11l-7 6")}</>],
  ["Spline", <>{P("M4 8q3-5 6 0")}</>],
];

/* ---------- tabs, canvas, status ---------- */

const View = styled.section`
  flex: 1;
  display: flex;
  flex-direction: column;
  min-width: 0;
`;
const TabBar = styled.div`
  flex: none;
  display: flex;
  height: 22px;
  background: #d9d9d9;
`;
const GridButton = styled.button`
  flex: none;
  display: flex;
  align-items: center;
  justify-content: center;
  width: 26px;
`;
const Tab = styled.button`
  flex: 0 1 219px;
  display: flex;
  align-items: center;
  gap: 2px;
  min-width: 0;
  padding: 0 9px 0 3px;
  border-left: 1px solid #c2c2c2;
  background: ${(p) => (p.$on ? "#fff" : "transparent")};
  white-space: nowrap;
`;
const TabClose = styled.span`
  margin-left: auto;
`;
const TabEnd = styled.button`
  flex: 1;
  display: flex;
  align-items: center;
  justify-content: center;
  min-width: 38px;
  border-left: 1px solid #c2c2c2;
  background: #e8e8e8;
`;
const Canvas = styled.div`
  flex: 1;
  position: relative;
  min-height: 0;
  overflow: hidden;
  background: #fff;
`;
const Sketch = styled.svg`
  position: absolute;
  inset: 0;
`;
const Handle = styled.span`
  position: absolute;
  display: flex;
  align-items: center;
  justify-content: center;
  border-radius: 3px;
  background: #f3f3f3;
  ${(p) => p.$at === "top" && "top: 1px; left: 680px; width: 32px; height: 16px;"}
  ${(p) => p.$at === "bottom" && "bottom: 1px; left: 680px; width: 32px; height: 16px;"}
  ${(p) => p.$at === "left" && "left: 1px; top: 549px; width: 16px; height: 32px;"}
  ${(p) => p.$at === "right" && "right: 0; top: 549px; width: 4px; height: 32px;"}
`;
const StatusBar = styled.div`
  flex: none;
  display: flex;
  height: 19px;
  overflow: hidden;
`;
const ZoomTools = styled.div`
  flex: none;
  display: flex;
  align-items: center;
  gap: 5px;
  width: 71px;
  padding-left: 3px;
`;
const StatusCell = styled.button`
  flex: none;
  display: flex;
  align-items: center;
  gap: 2px;
  width: ${(p) => p.$w}px;
  padding: 0 6px 0 4px;
  border-left: 1px solid #9a9a9a;
  color: ${(p) => (p.$off ? "#9c9c9c" : "#000")};
  white-space: nowrap;
`;
const StatusText = styled.span`
  flex: 1;
  padding-left: 4px;
  text-align: center;
`;
const StatusIcon = styled.span`
  display: flex;
  justify-content: center;
  width: 20px;
`;
const Footer = styled.div`
  flex: none;
  display: flex;
  align-items: flex-end;
  height: 6px;
  border-top: 1px solid ${LINE};
  overflow: hidden;
`;
const Tick = styled.span`
  flex: none;
  width: ${(p) => p.$w}px;
  height: 1px;
  border-right: 1px solid #777;
`;

const Dashes = ({ vertical }) => (
  <svg width={vertical ? 1 : 26} height={vertical ? 26 : 1} stroke="#ffa04d" strokeWidth="1" strokeDasharray="5 2">
    <path d={vertical ? "M.5 0v26" : "M0 .5h26"} />
  </svg>
);
const ZoomIcon = ({ kind }) => (
  <Svg w={18} h={18} color={kind === "next" ? "#b5b5b5" : INK}>
    {kind === "prev" && P("M3.500 5.500a6.500 6.500 0 1 1 1 7M6 13l-3.500 4M0 9h9M3 6l-3 3 3 3")}
    {kind === "next" && P("M14.500 5.500a6.500 6.500 0 1 0-1 7M12 13l4 4M9 9h9M15 6l3 3-3 3")}
    {(kind === "in" || kind === "fit") && <><circle cx="8" cy="8" r="6.500" />{P("M12 13l4 4", { strokeWidth: 1.800 })}</>}
    {kind === "in" && P("M5 8h6M8 5v6")}
    {kind === "fit" && P("M8 3v3M8 10v3M3 8h3M10 8h3M6.500 5l1.500-1.500 1.500 1.500M6.500 11l1.500 1.500 1.500-1.500", { strokeWidth: 1.500 })}
  </Svg>
);
const status = [
  [121, <ZoomIcon kind="fit" />, "N/A", true],
  [121, <Svg w={16} h={14} color="#b0b0b0">{P("M1 6l4-5 5 5-4.500 5.500zM11 12q4-1 3-8M11.500 6l2.500-2.500 2 2.500")}</Svg>, "N/A", true],
  [121, <RulerIcon />, "1:100"],
  [120, <StackIcon />, "07 Fasade (al..."],
  [120, <Svg w={14} h={14}><rect x="0.600" y="0.600" width="12.800" height="12.800" />{P("M1 4h12M1 10h12")}{P("M2 9l4-4M6 9l4-4M10 9l3-3M3 13l3-3M8 13l3-3M3 4l3-3M8 4l3-3")}</Svg>, "Entire Model"],
  [120, <Svg w={10} h={16}>{P("M2 1v9l3 5 3-5v-9M2 10h6M5 12v3")}</Svg>, "02 Penner 1:..."],
  [120, <FrameIcon />, "02 Byggesøk..."],
  [120, <Svg w={16} h={16}>{P("M6 5h-5v8h5M5 3q5-3 7 2M13.500 2v4h-4")}<rect x="8.500" y="7.500" width="6" height="8" fill="#9a9a9a" /></Svg>, "02 Byggesøk..."],
  [120, <Svg w={16} h={16}>{P("M1 13l7-11v11z", { stroke: OFF })}{P("M8 2l6 7v6h-6v-3M8 15h6M10.500 15v-4h2v4M8 2v13")}</Svg>, "01 Nybygg"],
  [120, <Svg w={18} h={16}>{P("M1 10v-5l5-4 3 1M3 12v-5l5-4 4 1M6 14v-5l4-3h6v2M9 15v-5h7v5M12 15v-3h2v3")}</Svg>, "Main Model ..."],
];
const footerTicks = [71, 95, 95, 108, 108, 108, 129, 58, 54, 59, 107, 54, 233, 200];

export default function App() {
  return (
    <Page>
      <Global />
      <TitleStrip />
      <MenuBar>
        {["File", "Edit", "View", "Design", "Document", "Options", "Teamwork", "Window", "Help"].map((m) => (
          <button key={m}>{m}</button>
        ))}
        <WindowButtons>
          <button aria-label="Minimize"><Svg w={8} h={8}>{P("M0 4h8", { strokeWidth: 1.500 })}</Svg></button>
          <button aria-label="Restore"><Svg w={9} h={9}><rect x="1" y="2.500" width="5.500" height="5.500" rx="1" strokeWidth="1.500" />{P("M3 1h4q1 0 1 1v4", { strokeWidth: 1.500 })}</Svg></button>
        </WindowButtons>
      </MenuBar>
      <ToolBar>
        <Grip />
        {toolbar.map((t, i) => {
          if (!t) return <Separator key={i} />;
          const [id, label, split, live, on] = t;
          return (
            <React.Fragment key={i}>
              <ToolButton $size={split ? "wide" : "std"} $on={on} aria-label={label}>
                <Svg color={live ? INK : OFF}>{tool[id]}</Svg>
              </ToolButton>
              {!!split && (
                <ToolButton $size="arrow" $on={on} aria-label={`${label} options`}><Down w={7} color={live ? "#222" : "#6f6f6f"} /></ToolButton>
              )}
            </React.Fragment>
          );
        })}
      </ToolBar>
      <Body>
        <SidePanel />
        <Main>
          <InfoBox>
            Main:
            <InfoTools>
              <InfoGrip />
              <SmallButton $w={39} $h={18} $gap={7} aria-label="Selection method"><Svg w={18} h={14}><rect x="0.600" y="0.600" width="16.800" height="12.800" strokeDasharray="2 1.500" />{P("M4 10l8-6")}{P("M4 3h4v4h-4zM11 2h4v3h-4zM3 9h3v3h-3z", solid())}</Svg><Right /></SmallButton>
              <SmallButton $w={39} $h={18} $gap={7} aria-label="Marquee method"><Svg w={18} h={14}>{P("M11 1.500h-10v11h12v-4", { strokeDasharray: "3 1.500" })}{P("M12 0v8l2-2 1.500 3 1.500-1-1.500-2.500h2.500z", solid())}</Svg><Right /></SmallButton>
              <SmallButton $w={40} $h={18} $on aria-label="Magnet"><Svg w={18} h={16}>{P("M8 2l6 6c2 4-3 8-6 6l-5-5M10.500 5l-3 3M5.500 7.500l4 4q2.500-1 1.500-3l-4-4")}<circle cx="7.500" cy="3" r="2.500" {...solid()} /><circle cx="3.500" cy="8" r="2.500" {...solid("#888")} /></Svg></SmallButton>
              <SmallButton $w={48} $h={28} $gap={12} aria-label="Arrow"><Svg w={18} h={18}>{P("M6 3v12l3-3 2.500 4.500 2-1-2-4.500h4z", { fill: "#8b8b8b" })}</Svg><Right /></SmallButton>
            </InfoTools>
          </InfoBox>
          <Work>
            <ToolBox>
              <PaletteGrip $w={17} $m="4px auto 4px" />
              <ToolList>
                <ArrowButton aria-label="Arrow"><Pointer /></ArrowButton>
                <MarqueeButton aria-label="Marquee"><Svg>{P("M1 3h18v14h-18z", { strokeDasharray: "3 1.500" })}</Svg></MarqueeButton>
                <BoxHead $m="2px 0">Design</BoxHead>
                {design.map(([n, art]) => <BoxButton key={n} aria-label={n}><Svg>{art}</Svg></BoxButton>)}
                <BoxHead $m="4px 0 1px">Docume</BoxHead>
                {documenting.map(([n, art]) => <BoxButton key={n} aria-label={n}><Svg>{art}</Svg></BoxButton>)}
              </ToolList>
              <BoxHead>More</BoxHead>
            </ToolBox>
            <View>
              <TabBar>
                <GridButton aria-label="Tab overview"><Svg w={18} h={14}>{P("M1 1h6.500v4h-6.500zM10.500 1h6.500v4h-6.500zM1 9h6.500v4h-6.500zM10.500 9h6.500v4h-6.500z")}</Svg></GridButton>
                <Tab><Plan color={INK} />[4. Takplan]</Tab>
                <Tab><Facade />Fasade [Fasade]</Tab>
                <Tab $on><Facade color={INK} roof />[Snitt A]<TabClose><Svg w={7} h={7}>{P("M.5.5l6 6M6.500.5l-6 6", { strokeWidth: 1.800 })}</Svg></TabClose></Tab>
                <Tab><Layout />[A40-1 Fasade Nord og Vest]</Tab>
                <Tab><Layout fill="#93a1b3" />[A3 Liggende]</Tab>
                <Tab><Persp color={INK} />[3D / All]</Tab>
                <TabEnd aria-label="Tab options"><Svg w={22} h={14}>{P("M9 11h-8v-5l4-4h4l5 4v5h-5v-5l-4-4M9 6h5")}{P("M16 9v5M18 10.500h3M18 13h3", { strokeWidth: 1.500 })}</Svg></TabEnd>
              </TabBar>
              <Canvas>
                <Sketch width="100%" height="100%" fill="none">
                  <rect x="561" y="128" width="275" height="153" fill="#f2f2f2" stroke="#6e6e6e" strokeDasharray="12 4 2 4" shapeRendering="crispEdges" />
                  <path d="M561 128l250 250" stroke="#e6edf9" strokeWidth="1.200" strokeDasharray="5 4" />
                  <path d="M557 124l7 7M564 124l-7 7" stroke="#444" strokeWidth="1.800" />
                  <rect x="679" y="178" width="15" height="8" stroke="#000" shapeRendering="crispEdges" />
                  <path d="M695 177.500v9" stroke="#000" strokeWidth="1" shapeRendering="crispEdges" />
                  <text x="770" y="364" fontSize="11" fontFamily="Open Sans, sans-serif" fill="#e0f0fd">315,000°</text>
                  <path d="M694 922l6 6M700 922l-6 6" stroke="#9a9a9a" strokeWidth="1.500" />
                </Sketch>
                <Handle $at="top"><Dashes /></Handle>
                <Handle $at="left"><Dashes vertical /></Handle>
                <Handle $at="right" />
                <Handle $at="bottom"><Dashes /></Handle>
              </Canvas>
              <StatusBar>
                <ZoomTools>
                  <button aria-label="Previous zoom"><ZoomIcon kind="prev" /></button>
                  <button aria-label="Next zoom"><ZoomIcon kind="next" /></button>
                  <button aria-label="Zoom in"><ZoomIcon kind="in" /></button>
                </ZoomTools>
                {status.map(([w, icon, text, off], i) => (
                  <StatusCell key={i} $w={w} $off={off}>
                    <StatusIcon>{icon}</StatusIcon>
                    <StatusText>{text}</StatusText>
                    <Right color={off ? "#aaa" : "#222"} />
                  </StatusCell>
                ))}
                <StatusCell $w={113}>
                  <StatusIcon><Svg w={16} h={16}>{P("M1 2h14M1 0v4M15 0v4")}<rect x="1.500" y="7" width="13" height="8" /></Svg></StatusIcon>
                  <StatusText>Standard</StatusText>
                </StatusCell>
              </StatusBar>
            </View>
          </Work>
        </Main>
      </Body>
      <Footer>{footerTicks.map((w, i) => <Tick key={i} $w={w} />)}</Footer>
    </Page>
  );
}
